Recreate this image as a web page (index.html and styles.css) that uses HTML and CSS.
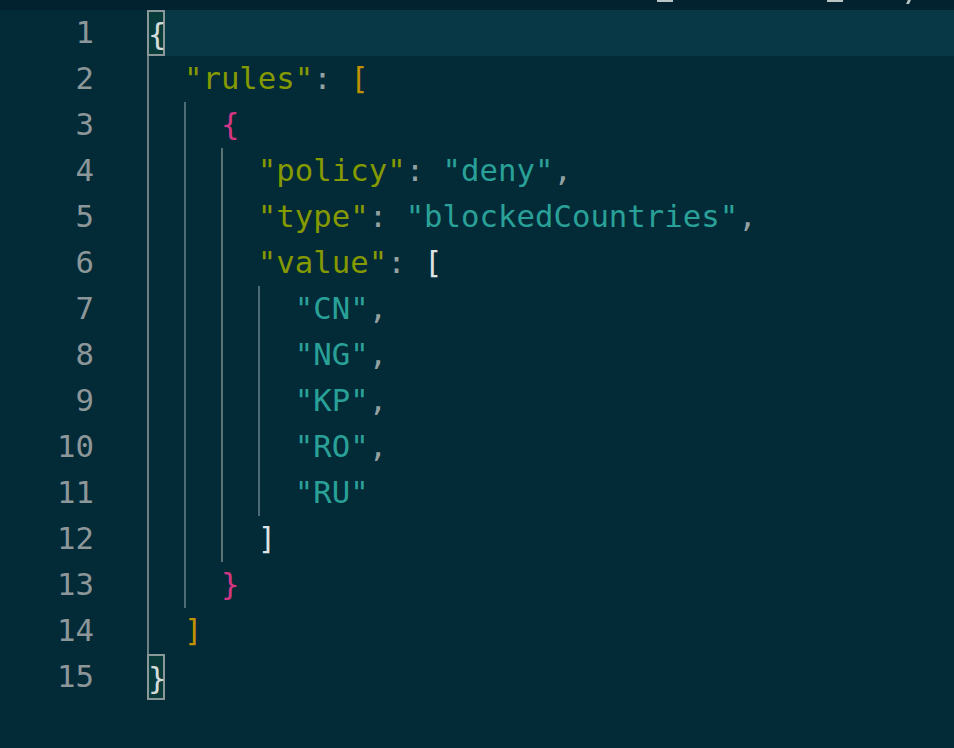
FILE: index.html
```html
<!DOCTYPE html>
<html>
<head>
<meta charset="utf-8">
<link rel="stylesheet" href="styles.css">
</head>
<body>
<div class="topband">
  <span class="mark m1"></span>
  <span class="mark m2"></span>
  <span class="mark m3"></span>
</div>
<div class="editor">
  <div class="line current"><span class="ln">1</span><span class="code"><span class="match">{</span></span></div>
  <div class="line"><span class="ln">2</span><span class="code"><span class="ind g0"></span><span class="key">"rules"</span><span class="p">: </span><span class="b1">[</span></span></div>
  <div class="line"><span class="ln">3</span><span class="code"><span class="ind g0"></span><span class="ind g1"></span><span class="b2">{</span></span></div>
  <div class="line"><span class="ln">4</span><span class="code"><span class="ind g0"></span><span class="ind g1"></span><span class="ind g2"></span><span class="key">"policy"</span><span class="p">: </span><span class="str">"deny"</span><span class="p">,</span></span></div>
  <div class="line"><span class="ln">5</span><span class="code"><span class="ind g0"></span><span class="ind g1"></span><span class="ind g2"></span><span class="key">"type"</span><span class="p">: </span><span class="str">"blockedCountries"</span><span class="p">,</span></span></div>
  <div class="line"><span class="ln">6</span><span class="code"><span class="ind g0"></span><span class="ind g1"></span><span class="ind g2"></span><span class="key">"value"</span><span class="p">: </span><span class="b3">[</span></span></div>
  <div class="line"><span class="ln">7</span><span class="code"><span class="ind g0"></span><span class="ind g1"></span><span class="ind g2"></span><span class="ind g3"></span><span class="str">"CN"</span><span class="p">,</span></span></div>
  <div class="line"><span class="ln">8</span><span class="code"><span class="ind g0"></span><span class="ind g1"></span><span class="ind g2"></span><span class="ind g3"></span><span class="str">"NG"</span><span class="p">,</span></span></div>
  <div class="line"><span class="ln">9</span><span class="code"><span class="ind g0"></span><span class="ind g1"></span><span class="ind g2"></span><span class="ind g3"></span><span class="str">"KP"</span><span class="p">,</span></span></div>
  <div class="line"><span class="ln">10</span><span class="code"><span class="ind g0"></span><span class="ind g1"></span><span class="ind g2"></span><span class="ind g3"></span><span class="str">"RO"</span><span class="p">,</span></span></div>
  <div class="line"><span class="ln">11</span><span class="code"><span class="ind g0"></span><span class="ind g1"></span><span class="ind g2"></span><span class="ind g3"></span><span class="str">"RU"</span></span></div>
  <div class="line"><span class="ln">12</span><span class="code"><span class="ind g0"></span><span class="ind g1"></span><span class="ind g2"></span><span class="b3">]</span></span></div>
  <div class="line"><span class="ln">13</span><span class="code"><span class="ind g0"></span><span class="ind g1"></span><span class="b2">}</span></span></div>
  <div class="line"><span class="ln">14</span><span class="code"><span class="ind g0"></span><span class="b1">]</span></span></div>
  <div class="line"><span class="ln">15</span><span class="code"><span class="match">}</span></span></div>
</div>
</body>
</html>
```

FILE: styles.css
```css
html, body {
  margin: 0;
  padding: 0;
  background: #022a37;
  height: 100%;
  overflow: hidden;
}

.topband {
  height: 10px;
  background: #01222e;
  display: flex;
  align-items: flex-start;
}

.mark {
  display: block;
  height: 2px;
  background: #b9c4c4;
}
.m1 { margin-left: 657px; width: 16px; }
.m2 { margin-left: 154px; width: 16px; }
.m3 { margin-left: 64px; width: 3px; height: 4px; transform: skewX(-25deg); }

.editor {
  font-family: "DejaVu Sans Mono", "Liberation Mono", monospace;
  font-size: 30.7px;
  line-height: 46px;
}

.line {
  display: flex;
  height: 46px;
  white-space: pre;
}

.ln {
  width: 94px;
  flex: none;
  text-align: right;
  color: #8d9799;
}

.code {
  flex: 1;
  margin-left: 53px;
  display: flex;
  align-items: stretch;
}

.current .code {
  background: #083745;
}

.ind {
  display: inline-block;
  box-sizing: border-box;
  width: 2ch;
  height: 46px;
  border-left: 2px solid #4e6c76;
}
.ind.g0 { border-left-color: #6f8185; }
.ind.g2 { border-left-color: #5b7277; }

.match {
  display: inline-block;
  box-sizing: border-box;
  width: 18px;
  height: 46px;
  background: #093b3a;
  border: 2px solid #8a9899;
  color: #d3dcdc;
  text-indent: -1px;
  overflow: visible;
}

.key { color: #859900; }
.str { color: #2aa198; }
.p { color: #93a1a1; }
.b1 { color: #c09000; }
.b2 { color: #d33682; }
.b3 { color: #dde3e4; }
```
